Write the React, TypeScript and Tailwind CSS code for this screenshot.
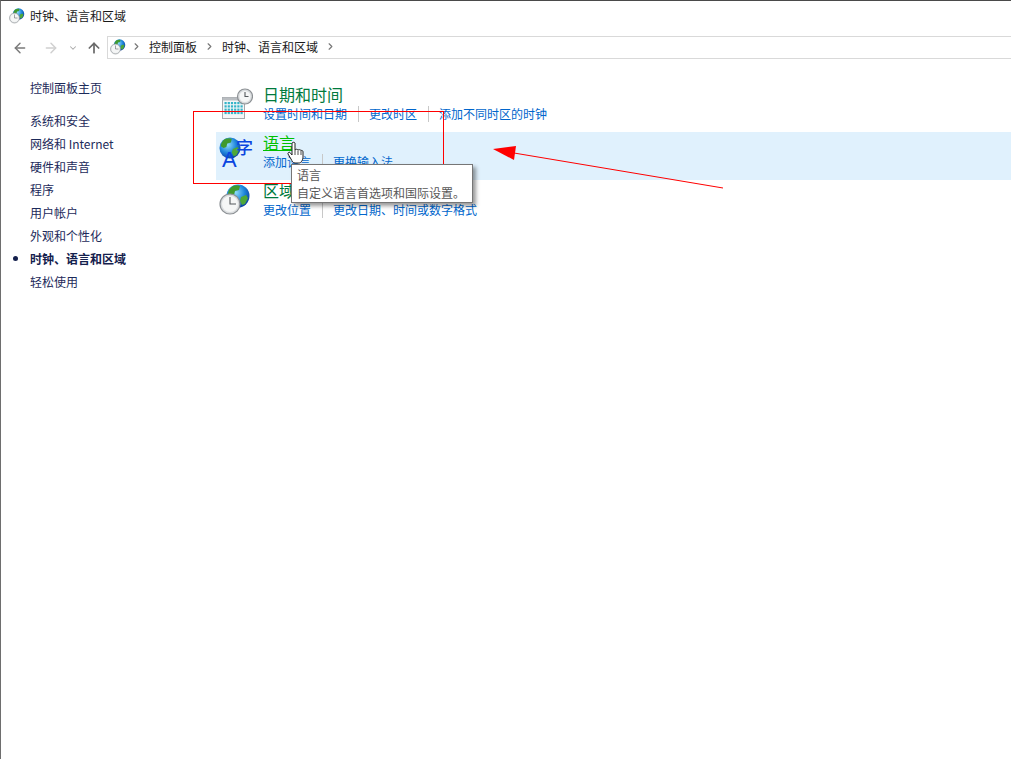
import { ArrowLeft, ArrowRight, ArrowUp, ChevronDown, ChevronRight } from "lucide-react";

const SIDE_LINKS = ["系统和安全", "网络和 Internet", "硬件和声音", "程序", "用户帐户", "外观和个性化"];

function Globe({ id }: { id: string }) {
  return (
    <>
      <defs>
        <radialGradient id={id} cx="40%" cy="35%" r="70%">
          <stop offset="0%" stopColor="#8fdcf8" />
          <stop offset="55%" stopColor="#1f86dc" />
          <stop offset="100%" stopColor="#0a3a9c" />
        </radialGradient>
      </defs>
      <circle cx="19" cy="12" r="11.5" fill={`url(#${id})`} />
      <path d="M13 2.500c3-1.500 6-1.500 8 -.5l-1 4-4 1-1 4-3 1-3-2c0-3 2-6 4-7.500z" fill="#3f9a2e" />
      <path d="M22 13l5-2 2 3-3 6-3 1-2-4z" fill="#4ea838" />
    </>
  );
}

function Clock({ cx, cy, r }: { cx: number; cy: number; r: number }) {
  return (
    <>
      <circle cx={cx} cy={cy} r={r} fill="#d9dcde" stroke="#8c9094" strokeWidth="1.2" />
      <circle cx={cx} cy={cy} r={r - 2} fill="#f5f6f6" />
      <path d={`M${cx} ${cy - r + 3}V${cy}H${cx + r - 4}`} fill="none" stroke="#55595d" strokeWidth="1.1" />
    </>
  );
}

function SmallGlobeIcon({ id, className }: { id: string; className: string }) {
  return (
    <svg viewBox="0 0 32 32" className={className}>
      <Globe id={id} />
      <Clock cx={11} cy={20} r={10} />
    </svg>
  );
}

function CalendarIcon() {
  const cells = [];
  for (let y = 0; y < 4; y++) {
    for (let x = 0; x < 6; x++) {
      cells.push(<rect key={`${x}-${y}`} x={5.5 + x * 3.2} y={14 + y * 3.3} width="2.2" height="2.2" fill="#35b4c8" />);
    }
  }
  return (
    <svg viewBox="0 0 34 32" className="h-8 w-[34px] shrink-0">
      <rect x="3.500" y="9.500" width="22" height="21" fill="#f4f6f7" stroke="#a5a9ad" />
      <rect x="3.500" y="9.500" width="22" height="3" fill="#b9bdc1" />
      {cells}
      <Clock cx={26} cy={8.5} r={7.5} />
    </svg>
  );
}

function LanguageIcon() {
  return (
    <div className="relative h-9 w-9 shrink-0">
      <svg viewBox="7 0 24 24" className="h-6 w-[22px]">
        <Globe id="lang-globe" />
      </svg>
      <span className="absolute left-[17px] top-[1px] font-['Noto_Sans_CJK_SC',sans-serif] text-[17px] font-medium leading-[20px] text-[#0a45e0]">
        字
      </span>
      <span className="absolute left-[3px] top-[12px] font-['Liberation_Sans',sans-serif] text-[22px] leading-[24px] text-[#0a45e0]">
        A
      </span>
    </div>
  );
}

function Category({
  icon,
  title,
  links,
  active,
}: {
  icon: React.ReactNode;
  title: string;
  links: string[];
  active?: boolean;
}) {
  return (
    <div className={`flex h-12 items-start pl-[3px] ${active ? "bg-[#e0f1fd]" : ""}`}>
      <div className="flex w-11 pt-1">{icon}</div>
      <div className="-mt-px flex flex-col">
        <div className={`text-base leading-[22px] ${active ? "text-[#00c000]" : "text-[#007a3d]"}`}>
          <span className={active ? "underline" : ""}>{title}</span>
        </div>
        <div className="mt-[1px] flex items-center text-xs leading-[16px] text-[#0066cc]">
          {links.map((link, i) => (
            <span key={link} className={i > 0 ? "ml-[11px] border-l border-[#c8c8c8] pl-[10px]" : ""}>
              {link}
            </span>
          ))}
        </div>
      </div>
    </div>
  );
}

export default function App() {
  return (
    <div className="relative h-[759px] w-[1011px] overflow-hidden border-t border-l border-t-[#4a4a4a] border-l-[#6e6e6e] bg-white font-['Noto_Sans_CJK_SC',sans-serif] text-xs text-[#1a1a1a]">
      <header className="flex h-[30px] items-center gap-[5px] pl-2">
        <SmallGlobeIcon id="title-globe" className="h-4 w-4" />
        <span>时钟、语言和区域</span>
      </header>

      <nav className="mt-[5px] flex h-[23px] items-center">
        <div className="flex w-[106px] items-center pl-[11px] text-[#7a7a7a]">
          <ArrowLeft size={16} strokeWidth={2.2} />
          <ArrowRight size={16} strokeWidth={2.2} className="ml-[15px] text-[#d0d0d0]" />
          <ChevronDown size={10} strokeWidth={2.5} className="ml-[9px] text-[#a8a8a8]" />
          <ArrowUp size={16} strokeWidth={2.6} className="ml-[8px] text-[#6a6a6a]" />
        </div>
        <div className="flex h-[23px] flex-1 items-center border-y border-l border-[#d9d9d9] pb-[2px] pl-[2px]">
          <SmallGlobeIcon id="nav-globe" className="h-4 w-4" />
          <ChevronRight size={11} strokeWidth={2.5} className="ml-[5px] text-[#777777]" />
          <span className="ml-[7px]">控制面板</span>
          <ChevronRight size={11} strokeWidth={2.5} className="ml-[7px] text-[#777777]" />
          <span className="ml-[7px]">时钟、语言和区域</span>
          <ChevronRight size={11} strokeWidth={2.5} className="ml-[7px] text-[#777777]" />
        </div>
      </nav>

      <main className="flex">
        <aside className="w-[215px] pt-[17px] pl-[29px] text-[#1c2a5a]">
          <div className="leading-[23px]">控制面板主页</div>
          <ul className="mt-[10px] leading-[23px]">
            {SIDE_LINKS.map((link) => (
              <li key={link}>{link}</li>
            ))}
            <li className="relative font-bold text-[#14204d]">
              <span className="absolute left-[-17px] top-[9px] h-[5px] w-[5px] rounded-full bg-[#14204d]" />
              时钟、语言和区域
            </li>
            <li>轻松使用</li>
          </ul>
        </aside>
        <section className="flex-1 pt-[25px]">
          <Category icon={<CalendarIcon />} title="日期和时间" links={["设置时间和日期", "更改时区", "添加不同时区的时钟"]} />
          <Category icon={<LanguageIcon />} title="语言" links={["添加语言", "更换输入法"]} active />
          <Category
            icon={<SmallGlobeIcon id="region-globe" className="h-8 w-8" />}
            title="区域"
            links={["更改位置", "更改日期、时间或数字格式"]}
          />
        </section>
      </main>

      {/* 标注：红框、箭头、提示、鼠标 */}
      <svg className="absolute left-[192px] top-[110px]" width="540" height="90" viewBox="0 0 540 90">
        <rect x="0.5" y="0.5" width="250" height="72" fill="none" stroke="#ff0000" strokeWidth="1" shapeRendering="crispEdges" />
        <path d="M300 38L323 35L321 49Z" fill="#ff0000" />
        <path d="M321 42L530 77" stroke="#ff0000" strokeWidth="1" fill="none" />
      </svg>
      <div className="absolute left-[290px] top-[163px] flex h-[39px] w-[182px] flex-col justify-center border border-[#767676] bg-white pl-[5px] leading-[18px] text-[#575757] shadow-[3px_3px_4px_rgba(0,0,0,0.4)]">
        <div>语言</div>
        <div>自定义语言首选项和国际设置。</div>
      </div>
      <svg className="absolute left-[286px] top-[140px]" width="18" height="24" viewBox="0 0 18 24">
        <path
          d="M5 2c1-1 2.500-1 3 0v7c1-1 2-1 3 0 1-.5 2-.5 3 .500 1-.3 2 0 2 1.500v5c0 3-2 6-4 6H8c-2 0-3-2-4-4L1 13c-.5-1 1-2.500 2-1.500l2 2.500z"
          fill="#ffffff"
          stroke="#222222"
          strokeWidth="1"
        />
        <path d="M8 9v5M11 9.500v4.500M14 10v4" stroke="#222222" strokeWidth="0.8" />
      </svg>
    </div>
  );
}
